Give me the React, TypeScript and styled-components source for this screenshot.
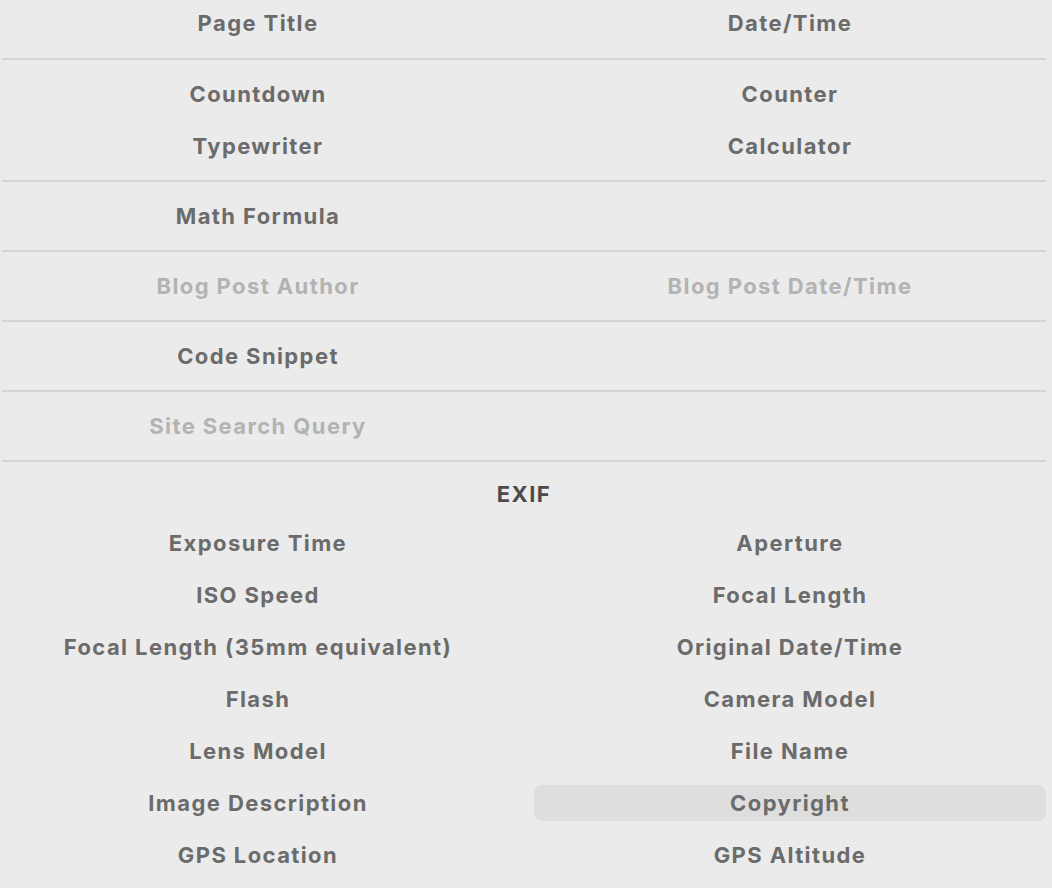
import styled, { createGlobalStyle } from 'styled-components';

const GlobalStyle = createGlobalStyle`
    html, body {
        margin: 0;
        padding: 0;
        background: #ebebeb;
    }
    body {
        font-family: Inter, "Noto Sans", "DejaVu Sans", sans-serif;
        -webkit-font-smoothing: antialiased;
    }
`

const Panel = styled.div`
    width: 1044px;
    margin-left: 2px;
    padding-top: 5px;
    display: flex;
    flex-direction: column;
`

const Section = styled.div<{ $first?: boolean }>`
    padding: ${p => (p.$first ? '0 0 17px' : '16px 0')};
`

const Divider = styled.div`
    height: 2px;
    background: #d4d4d4;
`

const Grid = styled.div`
    display: grid;
    grid-template-columns: 512px 512px;
    column-gap: 20px;
    row-gap: 16px;
`

const Heading = styled.div`
    height: 32px;
    margin-bottom: 15px;
    display: flex;
    align-items: center;
    justify-content: center;
    font-size: 22px;
    font-weight: 700;
    letter-spacing: 1.4px;
    color: #4b4b4b;
`

const Item = styled.div<{ $disabled?: boolean; $active?: boolean }>`
    height: 36px;
    display: flex;
    align-items: center;
    justify-content: center;
    border-radius: 8px;
    font-size: 22px;
    font-weight: 700;
    letter-spacing: 1.4px;
    color: ${p => (p.$disabled ? '#b3b3b3' : '#6b6b6b')};
    background: ${p => (p.$active ? '#dedede' : 'transparent')};
    cursor: default;
`

type Entry = { label: string; disabled?: boolean; active?: boolean } | null

const sections: Entry[][] = [
    [{ label: 'Page Title' }, { label: 'Date/Time' }],
    [{ label: 'Countdown' }, { label: 'Counter' }, { label: 'Typewriter' }, { label: 'Calculator' }],
    [{ label: 'Math Formula' }, null],
    [{ label: 'Blog Post Author', disabled: true }, { label: 'Blog Post Date/Time', disabled: true }],
    [{ label: 'Code Snippet' }, null],
    [{ label: 'Site Search Query', disabled: true }, null],
]

const exif: Entry[] = [
    { label: 'Exposure Time' }, { label: 'Aperture' },
    { label: 'ISO Speed' }, { label: 'Focal Length' },
    { label: 'Focal Length (35mm equivalent)' }, { label: 'Original Date/Time' },
    { label: 'Flash' }, { label: 'Camera Model' },
    { label: 'Lens Model' }, { label: 'File Name' },
    { label: 'Image Description' }, { label: 'Copyright', active: true },
    { label: 'GPS Location' }, { label: 'GPS Altitude' },
]

const renderItems = (items: Entry[]) =>
    items.map((e, i) =>
        e ? <Item key={i} $disabled={e.disabled} $active={e.active}>{e.label}</Item> : <span key={i} />
    )

export default function App() {
    return (
        <>
            <GlobalStyle />
            <Panel>
                {sections.map((s, i) => (
                    <div key={i}>
                        <Section $first={i === 0}>
                            <Grid>{renderItems(s)}</Grid>
                        </Section>
                        <Divider />
                    </div>
                ))}
                <Section>
                    <Heading>EXIF</Heading>
                    <Grid>{renderItems(exif)}</Grid>
                </Section>
            </Panel>
        </>
    )
}
